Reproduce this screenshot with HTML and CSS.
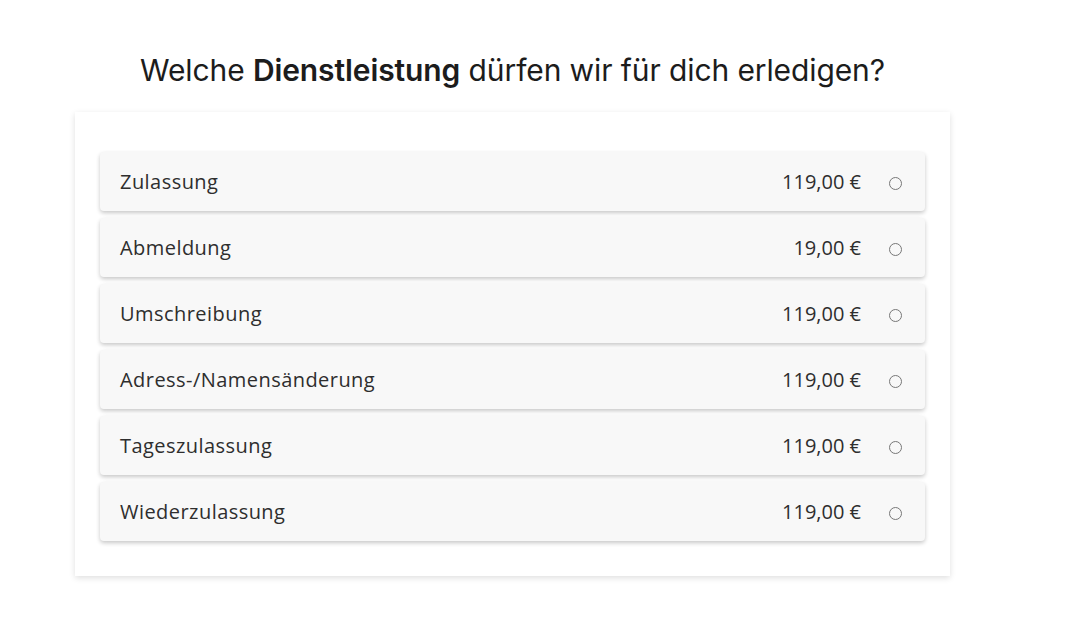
FILE: index.html
```html
<!DOCTYPE html>
<html lang="de">
<head>
<meta charset="utf-8">
<title>Dienstleistung</title>
<link rel="stylesheet" href="styles.css">
</head>
<body>
<main class="page">
  <h1 class="title">Welche <strong>Dienstleistung</strong> dürfen wir für dich erledigen?</h1>
  <section class="card">
    <ul class="list">
      <li class="row"><span class="name">Zulassung</span><span class="price">119,00 €</span><span class="radio"></span></li>
      <li class="row"><span class="name">Abmeldung</span><span class="price">19,00 €</span><span class="radio"></span></li>
      <li class="row"><span class="name">Umschreibung</span><span class="price">119,00 €</span><span class="radio"></span></li>
      <li class="row"><span class="name">Adress-/Namensänderung</span><span class="price">119,00 €</span><span class="radio"></span></li>
      <li class="row"><span class="name">Tageszulassung</span><span class="price">119,00 €</span><span class="radio"></span></li>
      <li class="row"><span class="name">Wiederzulassung</span><span class="price">119,00 €</span><span class="radio"></span></li>
    </ul>
  </section>
</main>
</body>
</html>
```
FILE: styles.css
```css
* { box-sizing: border-box; }
body {
  margin: 0;
  background: #fff;
  font-family: "Open Sans", "Noto Sans", sans-serif;
  color: #2b2b2b;
}
.page {
  width: 875px;
  margin-left: 75px;
  padding: 52px 0 40px;
}
.title {
  margin: 0;
  text-align: center;
  font-family: Inter, "Noto Sans", sans-serif;
  font-weight: 400;
  font-size: 30px;
  line-height: 36px;
  letter-spacing: -0.1px;
  color: #1c1c1c;
}
.title strong { font-weight: 600; }
.card {
  margin-top: 24px;
  background: #fff;
  box-shadow: 0 2px 6px rgba(0,0,0,0.13);
  padding: 40px 25px 35px;
}
.list {
  list-style: none;
  margin: 0;
  padding: 0;
  display: flex;
  flex-direction: column;
  gap: 7px;
}
.row {
  height: 59px;
  display: flex;
  align-items: center;
  padding: 0 24px 0 20px;
  background: #f8f8f8;
  border-radius: 4px;
  box-shadow: 0 2px 4px rgba(0,0,0,0.22);
  font-size: 20px;
  letter-spacing: 0.45px;
  color: #2e2e2e;
}
.name { flex: 1; }
.price { margin-right: 28px; letter-spacing: 0; }
.radio {
  width: 13px;
  height: 13px;
  margin-top: 3px;
  margin-right: -1px;
  border: 1.6px solid #777;
  border-radius: 50%;
}
```
